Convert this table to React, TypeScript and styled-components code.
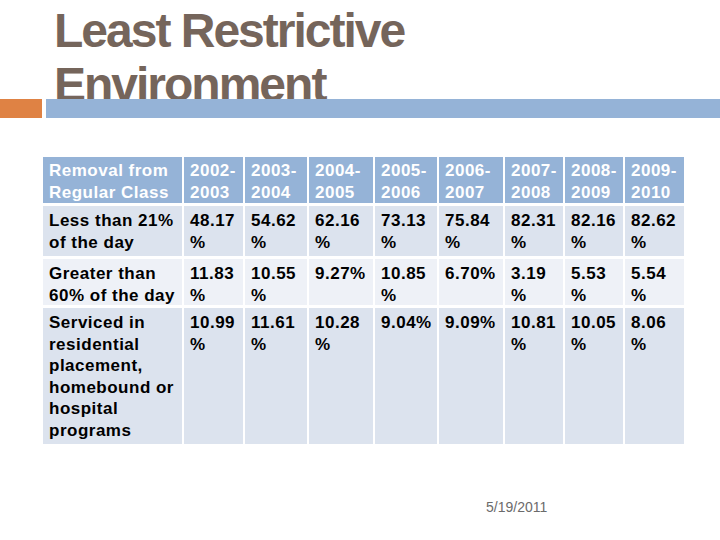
import React from 'react'
import styled, { createGlobalStyle } from 'styled-components'

const GlobalStyle = createGlobalStyle`
  html, body {
    margin: 0;
    padding: 0;
    background: #ffffff;
  }
  body {
    font-family: 'Liberation Sans', Arial, sans-serif;
  }
`

type Tone = 'head' | 'band' | 'plain'

const tones: Record<Tone, { bg: string; fg: string; top: number }> = {
  head: { bg: '#95b3d7', fg: '#ffffff', top: 3 },
  band: { bg: '#dce3ee', fg: '#000000', top: 4 },
  plain: { bg: '#eef1f7', fg: '#000000', top: 4 },
}

const Slide = styled.div`
  width: 720px;
  height: 540px;
  overflow: hidden;
  display: flex;
  flex-direction: column;
`

const Title = styled.h1`
  box-sizing: border-box;
  height: 99px;
  margin: 0;
  padding: 4px 0 0 54px;
  font: 700 48px/54px 'Liberation Sans', Arial, sans-serif;
  letter-spacing: -2px;
  color: #75655b;
  white-space: nowrap;
`

const RuleBar = styled.div`
  position: relative;
  display: flex;
  gap: 4px;
  height: 19px;
  flex-shrink: 0;
`

const Accent = styled.div`
  width: 42px;
  background: #df8244;
`

const Band = styled.div`
  flex: 1;
  background: #95b3d7;
`

const DataGrid = styled.div`
  margin: 39px 0 0 43px;
  display: grid;
  grid-template-columns: 139px 59px 62px 64px 62px 64px 58px 58px 59px;
  grid-template-rows: 46px 50px 46px 136px;
  column-gap: 2px;
  row-gap: 3px;
`

const Cell = styled.div<{ $tone: Tone }>`
  box-sizing: border-box;
  padding: ${(p) => tones[p.$tone].top}px 2px 0 6px;
  background: ${(p) => tones[p.$tone].bg};
  color: ${(p) => tones[p.$tone].fg};
  font: 700 17px/21.6px 'Liberation Sans', Arial, sans-serif;
  letter-spacing: 0.5px;
  white-space: nowrap;
  overflow: hidden;
`

const Line = styled.span`
  display: block;
`

const Footer = styled.div`
  margin-top: 55px;
  padding-left: 486px;
  display: flex;
`

const DateStamp = styled.span`
  font: 400 14px/16px 'Liberation Sans', Arial, sans-serif;
  color: #6b6b6b;
`

const header: string[][] = [
  ['Removal from', 'Regular Class'],
  ['2002-', '2003'],
  ['2003-', '2004'],
  ['2004-', '2005'],
  ['2005-', '2006'],
  ['2006-', '2007'],
  ['2007-', '2008'],
  ['2008-', '2009'],
  ['2009-', '2010'],
]

const rows: { tone: Tone; cells: string[][] }[] = [
  {
    tone: 'band',
    cells: [
      ['Less than 21%', 'of the day'],
      ['48.17', '%'],
      ['54.62', '%'],
      ['62.16', '%'],
      ['73.13', '%'],
      ['75.84', '%'],
      ['82.31', '%'],
      ['82.16', '%'],
      ['82.62', '%'],
    ],
  },
  {
    tone: 'plain',
    cells: [
      ['Greater than', '60% of the day'],
      ['11.83', '%'],
      ['10.55', '%'],
      ['9.27%'],
      ['10.85', '%'],
      ['6.70%'],
      ['3.19', '%'],
      ['5.53', '%'],
      ['5.54', '%'],
    ],
  },
  {
    tone: 'band',
    cells: [
      ['Serviced in', 'residential', 'placement,', 'homebound or', 'hospital', 'programs'],
      ['10.99', '%'],
      ['11.61', '%'],
      ['10.28', '%'],
      ['9.04%'],
      ['9.09%'],
      ['10.81', '%'],
      ['10.05', '%'],
      ['8.06', '%'],
    ],
  },
]

const renderCell = (lines: string[], tone: Tone, key: string) => (
  <Cell key={key} $tone={tone}>
    {lines.map((l, i) => (
      <Line key={i}>{l}</Line>
    ))}
  </Cell>
)

const App = () => (
  <>
    <GlobalStyle />
    <Slide>
      <Title>
        Least Restrictive
        <br />
        Environment
      </Title>
      <RuleBar>
        <Accent />
        <Band />
      </RuleBar>
      <DataGrid>
        {header.map((lines, i) => renderCell(lines, 'head', `h${i}`))}
        {rows.map((row, r) =>
          row.cells.map((lines, c) => renderCell(lines, row.tone, `r${r}c${c}`))
        )}
      </DataGrid>
      <Footer>
        <DateStamp>5/19/2011</DateStamp>
      </Footer>
    </Slide>
  </>
)

export default App
